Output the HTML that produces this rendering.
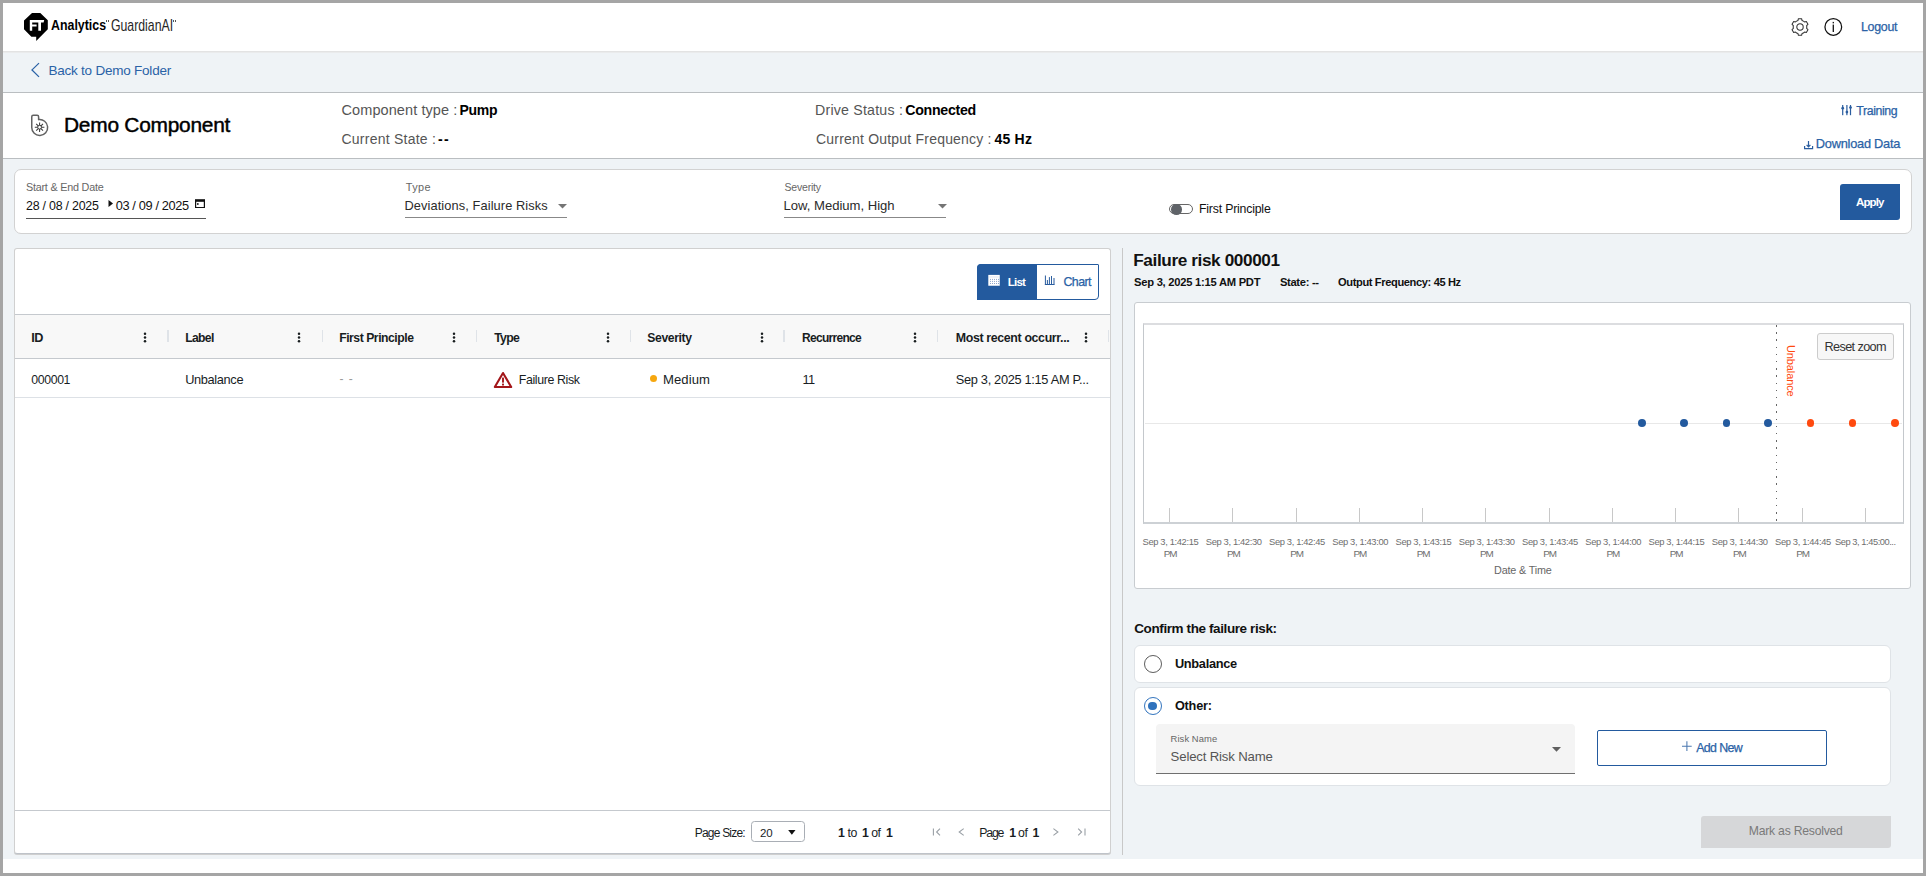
<!DOCTYPE html>
<html><head><meta charset="utf-8">
<style>
*{box-sizing:border-box;margin:0;padding:0}
html,body{width:1926px;height:876px;overflow:hidden}
body{position:relative;background:#a5a5a5;font-family:"Liberation Sans",sans-serif;color:#000}
.a{position:absolute}
.t{position:absolute;white-space:nowrap;line-height:1}
.card{position:absolute;background:#fff;border:1px solid #d3d7db}
</style></head>
<body>
<div class="a" style="left:3px;top:3px;width:1920px;height:870px;background:#fff"></div>
<div class="a" style="left:3px;top:51px;width:1920px;height:808px;background:#eff3f6"></div>
<div class="a" style="left:3px;top:51px;width:1920px;height:1px;background:#e3e3e3"></div>
<div class="a" style="left:3px;top:52px;width:1920px;height:1px;background:#eaebec"></div>

<!-- logo -->
<svg class="a" style="left:23px;top:12px" width="26" height="30" viewBox="0 0 26 30">
  <path d="M9 1H17.3L24.8 8.3V17.3L13.2 29V24.7H8.4L1 17.2V8.5Z" fill="#000"/>
  <path d="M6.8 8H21.2L20.6 10.5H18V18.8H15.3V10.5H9.2V12.4H13.6V14.5H9.2V18.8H6.8Z" fill="#fff"/>
</svg>
<div class="a" style="left:106px;top:20px;width:1.2px;height:2px;background:#555"></div>
<div class="a" style="left:107.6px;top:20px;width:1.2px;height:2px;background:#555"></div>
<div class="a" style="left:173px;top:20px;width:1.2px;height:2px;background:#555"></div>
<div class="a" style="left:174.6px;top:20px;width:1.2px;height:2px;background:#555"></div>

<!-- header right icons -->
<svg class="a" style="left:1790px;top:17px" width="20" height="20" viewBox="0 0 20 20">
  <path fill="none" stroke="#333" stroke-width="1.05" stroke-linejoin="round" d="M7.90 3.53L8.40 1.75L11.60 1.75L12.10 3.53A6.8 6.8 0 0 1 14.55 4.95L16.34 4.49L17.94 7.27L16.65 8.59A6.8 6.8 0 0 1 16.65 11.41L17.94 12.73L16.34 15.51L14.55 15.05A6.8 6.8 0 0 1 12.10 16.47L11.60 18.25L8.40 18.25L7.90 16.47A6.8 6.8 0 0 1 5.45 15.05L3.66 15.51L2.06 12.73L3.35 11.41A6.8 6.8 0 0 1 3.35 8.59L2.06 7.27L3.66 4.49L5.45 4.95A6.8 6.8 0 0 1 7.90 3.53Z"/>
  <circle cx="10" cy="10" r="3.2" fill="none" stroke="#333" stroke-width="1.05"/>
</svg>
<svg class="a" style="left:1823px;top:17px" width="20" height="20" viewBox="0 0 20 20">
  <circle cx="10.3" cy="9.9" r="8.35" fill="none" stroke="#111" stroke-width="1.25"/>
  <rect x="9.65" y="4.9" width="1.3" height="1.45" fill="#111"/>
  <rect x="9.65" y="7.6" width="1.3" height="7.4" fill="#111"/>
</svg>

<!-- breadcrumb -->
<svg class="a" style="left:29px;top:61px" width="12" height="18" viewBox="0 0 12 18">
  <path d="M10 2.1L3 8.9L10 15.9" fill="none" stroke="#2a62a6" stroke-width="1.3"/>
</svg>

<!-- component header -->
<div class="a" style="left:3px;top:92px;width:1920px;height:67px;background:#fff;border-top:1px solid #babec1;border-bottom:1px solid #babec1"></div>
<svg class="a" style="left:29px;top:112px" width="22" height="27" viewBox="0 0 22 27">
  <path d="M2.75 15.5V4.65Q2.75 3.15 4.25 3.15H8.1Q9.6 3.15 9.6 4.65V7.63A7.95 7.95 0 1 1 2.75 15.5Z" fill="none" stroke="#626262" stroke-width="1.5" stroke-linejoin="round"/>
  <g stroke="#3a3a3a" stroke-width="1.05"><path d="M10.6 10.4V20M5.8 15.2H15.4M7.2 11.8L14 18.6M14 11.8L7.2 18.6"/></g>
  <circle cx="10.6" cy="15.2" r="1.9" fill="#fff" stroke="#3a3a3a" stroke-width="1"/>
</svg>

<!-- training / download icons -->
<svg class="a" style="left:1840px;top:104px" width="13" height="12" viewBox="0 0 13 12">
  <g fill="#2a5d9f">
   <rect x="2.1" y="1" width="1.2" height="10.2"/><rect x="6.3" y="1" width="1.2" height="10.2"/><rect x="9.9" y="1" width="1.2" height="10.2"/>
   <circle cx="2.7" cy="4.2" r="1.35"/><circle cx="6.9" cy="8.1" r="1.35"/><circle cx="10.5" cy="3.6" r="1.35"/>
  </g>
</svg>
<svg class="a" style="left:1803px;top:140px" width="12" height="10" viewBox="0 0 12 10">
  <path d="M5.5 1V6.5M3.6 4.8L5.5 6.8L7.4 4.8M1.6 6V8.7H9.6V6" fill="none" stroke="#2a5d9f" stroke-width="1.2"/>
</svg>

<!-- filter card -->
<div class="card" style="left:14px;top:169px;width:1898px;height:65px;border-radius:7px;border-color:#d2d2d2"></div>
<svg class="a" style="left:107px;top:199px" width="8" height="10" viewBox="0 0 8 10"><path d="M1.5 1L6 4.5L1.5 8Z" fill="#111"/></svg>
<svg class="a" style="left:194px;top:198px" width="12" height="12" viewBox="0 0 12 12"><path d="M1.6 2H10.4V9.5H1.6Z" fill="none" stroke="#111" stroke-width="1.2"/><rect x="1" y="1.4" width="10" height="2.4" fill="#111"/><rect x="3" y="5.2" width="1.6" height="1.6" fill="#111"/></svg>
<div class="a" style="left:26px;top:218px;width:180px;height:1px;background:#555"></div>
<svg class="a" style="left:557px;top:203px" width="11" height="7" viewBox="0 0 11 7"><path d="M1 1H10L5.5 5.4Z" fill="#757575"/></svg>
<div class="a" style="left:405px;top:217px;width:162px;height:1px;background:#888"></div>
<svg class="a" style="left:936.5px;top:203px" width="11" height="7" viewBox="0 0 11 7"><path d="M1 1H10L5.5 5.4Z" fill="#757575"/></svg>
<div class="a" style="left:784px;top:217px;width:162px;height:1px;background:#888"></div>
<div class="a" style="left:1169.3px;top:204.2px;width:23.5px;height:9.6px;border:1.3px solid #666;border-radius:5px"></div>
<div class="a" style="left:1171.2px;top:204.2px;width:10.6px;height:10.6px;border-radius:50%;background:#5f6368"></div>
<div class="a" style="left:1840px;top:184px;width:60px;height:36px;background:#235a9e;border-radius:3px 0 3px 0"></div>

<!-- table card -->
<div class="card" style="left:14px;top:248px;width:1097px;height:606px;border-radius:3px;border-color:#d0d0d0;border-bottom-color:#bfc3c9;box-shadow:0 1px 0 #cfcfcf"></div>
<div class="a" style="left:977px;top:264px;width:122px;height:36px;border:1.4px solid #235a9e;border-radius:4px 1px 4px 0;background:#fff"></div>
<div class="a" style="left:977px;top:264px;width:60px;height:36px;background:#235a9e;border-radius:4px 0 0 0"></div>
<svg class="a" style="left:988px;top:274px" width="12" height="12" viewBox="0 0 12 12">
  <rect x="0.3" y="0.9" width="11.45" height="10.85" fill="#fff"/>
  <rect x="1.3" y="1.9" width="9.45" height="2" fill="#eef1f8"/>
  <g fill="#8ea6cc"><rect x="2.0" y="4.9" width="1" height="1"/><rect x="4.0" y="4.9" width="1" height="1"/><rect x="6.0" y="4.9" width="1" height="1"/><rect x="8.0" y="4.9" width="1" height="1"/><rect x="10.0" y="4.9" width="1" height="1"/><rect x="2.0" y="6.9" width="1" height="1"/><rect x="4.0" y="6.9" width="1" height="1"/><rect x="6.0" y="6.9" width="1" height="1"/><rect x="8.0" y="6.9" width="1" height="1"/><rect x="10.0" y="6.9" width="1" height="1"/><rect x="2.0" y="9.0" width="1" height="1"/><rect x="4.0" y="9.0" width="1" height="1"/><rect x="6.0" y="9.0" width="1" height="1"/><rect x="8.0" y="9.0" width="1" height="1"/><rect x="10.0" y="9.0" width="1" height="1"/></g>
</svg>
<svg class="a" style="left:1044px;top:275px" width="12" height="11" viewBox="0 0 12 11">
  <g fill="#2a5d9f"><rect x="0.9" y="0.5" width="1" height="9.5"/><rect x="0.9" y="9" width="9.6" height="1"/><rect x="2.9" y="5" width="1" height="4.5"/><rect x="4.9" y="2.1" width="1" height="7.4"/><rect x="7" y="1" width="1" height="8.5"/><rect x="9.5" y="3" width="1" height="6.5"/></g>
</svg>

<div class="a" style="left:15px;top:314px;width:1095px;height:45px;background:#f8f8f8;border-top:1px solid #c5c9ce;border-bottom:1px solid #c5c9ce"></div>
<div class="a" style="left:15px;top:397px;width:1095px;height:1px;background:#dde1e6"></div>
<svg class="a" style="left:142.9px;top:331px" width="4" height="12" viewBox="0 0 4 12"><g fill="#181d1f"><circle cx="2" cy="2.7" r="1.25"/><circle cx="2" cy="6.5" r="1.25"/><circle cx="2" cy="10.3" r="1.25"/></g></svg>
<svg class="a" style="left:297.0px;top:331px" width="4" height="12" viewBox="0 0 4 12"><g fill="#181d1f"><circle cx="2" cy="2.7" r="1.25"/><circle cx="2" cy="6.5" r="1.25"/><circle cx="2" cy="10.3" r="1.25"/></g></svg>
<svg class="a" style="left:451.7px;top:331px" width="4" height="12" viewBox="0 0 4 12"><g fill="#181d1f"><circle cx="2" cy="2.7" r="1.25"/><circle cx="2" cy="6.5" r="1.25"/><circle cx="2" cy="10.3" r="1.25"/></g></svg>
<svg class="a" style="left:605.5px;top:331px" width="4" height="12" viewBox="0 0 4 12"><g fill="#181d1f"><circle cx="2" cy="2.7" r="1.25"/><circle cx="2" cy="6.5" r="1.25"/><circle cx="2" cy="10.3" r="1.25"/></g></svg>
<svg class="a" style="left:759.5px;top:331px" width="4" height="12" viewBox="0 0 4 12"><g fill="#181d1f"><circle cx="2" cy="2.7" r="1.25"/><circle cx="2" cy="6.5" r="1.25"/><circle cx="2" cy="10.3" r="1.25"/></g></svg>
<svg class="a" style="left:913.3px;top:331px" width="4" height="12" viewBox="0 0 4 12"><g fill="#181d1f"><circle cx="2" cy="2.7" r="1.25"/><circle cx="2" cy="6.5" r="1.25"/><circle cx="2" cy="10.3" r="1.25"/></g></svg>
<svg class="a" style="left:1084.3px;top:331px" width="4" height="12" viewBox="0 0 4 12"><g fill="#181d1f"><circle cx="2" cy="2.7" r="1.25"/><circle cx="2" cy="6.5" r="1.25"/><circle cx="2" cy="10.3" r="1.25"/></g></svg>
<div class="a" style="left:167.05px;top:330.3px;width:1.5px;height:12.2px;background:#dfe3e8"></div>
<div class="a" style="left:321.55px;top:330.3px;width:1.5px;height:12.2px;background:#dfe3e8"></div>
<div class="a" style="left:475.55px;top:330.3px;width:1.5px;height:12.2px;background:#dfe3e8"></div>
<div class="a" style="left:629.55px;top:330.3px;width:1.5px;height:12.2px;background:#dfe3e8"></div>
<div class="a" style="left:783.05px;top:330.3px;width:1.5px;height:12.2px;background:#dfe3e8"></div>
<div class="a" style="left:936.75px;top:330.3px;width:1.5px;height:12.2px;background:#dfe3e8"></div>
<div class="a" style="left:1107.95px;top:330.3px;width:1.5px;height:12.2px;background:#dfe3e8"></div>

<div class="t" style="left:339.5px;top:373px;font-size:12px;color:#9a9a9a;letter-spacing:1px">- -</div>
<svg class="a" style="left:492px;top:370px" width="22" height="20" viewBox="0 0 22 20">
  <path d="M11 3L19.2 17H2.8Z" fill="none" stroke="#a3161a" stroke-width="2.1" stroke-linejoin="round"/>
  <rect x="10.05" y="7.6" width="1.9" height="5" fill="#a3161a"/><rect x="10.05" y="13.6" width="1.9" height="1.9" fill="#a3161a"/>
</svg>
<div class="a" style="left:650.4px;top:375.1px;width:7px;height:7px;border-radius:50%;background:#f6a70f"></div>

<div class="a" style="left:15px;top:810px;width:1095px;height:1px;background:#c5c9ce"></div>
<div class="a" style="left:751.4px;top:821.4px;width:53.2px;height:21px;border:1px solid #a9aeb5;border-radius:3.5px;background:#fff"></div>
<svg class="a" style="left:786.5px;top:828.5px" width="10" height="7" viewBox="0 0 10 7"><path d="M1.2 1H8.5L4.85 5.7Z" fill="#111"/></svg>

<svg class="a" style="left:930px;top:826px" width="14" height="12" viewBox="0 0 14 12"><path d="M3.4 2.4V9.6M10 2.6L6.6 6L10 9.4" fill="none" stroke="#9aa0a6" stroke-width="1.1"/></svg>
<svg class="a" style="left:955px;top:826px" width="12" height="12" viewBox="0 0 12 12"><path d="M8.7 2.6L4.2 6L8.7 9.4" fill="none" stroke="#9aa0a6" stroke-width="1.1"/></svg>

<svg class="a" style="left:1050px;top:826px" width="12" height="12" viewBox="0 0 12 12"><path d="M3.4 2.6L7.9 6L3.4 9.4" fill="none" stroke="#9aa0a6" stroke-width="1.1"/></svg>
<svg class="a" style="left:1075px;top:826px" width="14" height="12" viewBox="0 0 14 12"><path d="M3.2 2.6L6.6 6L3.2 9.4M10 2.4V9.6" fill="none" stroke="#9aa0a6" stroke-width="1.1"/></svg>

<!-- divider -->
<div class="a" style="left:1122px;top:248px;width:1px;height:607px;background:#c8c8c8"></div>

<!-- chart card -->
<div class="card" style="left:1134px;top:302px;width:777px;height:287px;border-radius:3px;border-color:#c8ccd0"></div>
<div class="a" style="left:1143px;top:323px;width:761px;height:201px;border-style:solid;border-color:#dcdde0 #c4c8cc #cdd1d5 #c4c8cc;border-width:2px 1px 2px 1px"></div>
<div class="a" style="left:1145px;top:423px;width:757px;height:1px;background:#e8e8e8"></div>
<div class="a" style="left:1169.00px;top:508px;width:1px;height:14px;background:#c8c8c8"></div>
<div class="a" style="left:1232.25px;top:508px;width:1px;height:14px;background:#c8c8c8"></div>
<div class="a" style="left:1295.50px;top:508px;width:1px;height:14px;background:#c8c8c8"></div>
<div class="a" style="left:1358.75px;top:508px;width:1px;height:14px;background:#c8c8c8"></div>
<div class="a" style="left:1422.00px;top:508px;width:1px;height:14px;background:#c8c8c8"></div>
<div class="a" style="left:1485.25px;top:508px;width:1px;height:14px;background:#c8c8c8"></div>
<div class="a" style="left:1548.50px;top:508px;width:1px;height:14px;background:#c8c8c8"></div>
<div class="a" style="left:1611.75px;top:508px;width:1px;height:14px;background:#c8c8c8"></div>
<div class="a" style="left:1675.00px;top:508px;width:1px;height:14px;background:#c8c8c8"></div>
<div class="a" style="left:1738.25px;top:508px;width:1px;height:14px;background:#c8c8c8"></div>
<div class="a" style="left:1801.50px;top:508px;width:1px;height:14px;background:#c8c8c8"></div>
<div class="a" style="left:1864.75px;top:508px;width:1px;height:14px;background:#c8c8c8"></div>
<div class="a" style="left:1775.7px;top:325px;width:1.6px;height:197px;background:repeating-linear-gradient(#666 0 1.5px,transparent 1.5px 7.2px)"></div>
<div class="a" style="left:1638.1px;top:419.1px;width:7.8px;height:7.8px;border-radius:50%;background:#235a9e"></div>
<div class="a" style="left:1680.3px;top:419.1px;width:7.8px;height:7.8px;border-radius:50%;background:#235a9e"></div>
<div class="a" style="left:1722.7px;top:419.1px;width:7.8px;height:7.8px;border-radius:50%;background:#235a9e"></div>
<div class="a" style="left:1764.1px;top:419.1px;width:7.8px;height:7.8px;border-radius:50%;background:#235a9e"></div>
<div class="a" style="left:1806.5px;top:419.1px;width:7.8px;height:7.8px;border-radius:50%;background:#ff4a0f"></div>
<div class="a" style="left:1848.7px;top:419.1px;width:7.8px;height:7.8px;border-radius:50%;background:#ff4a0f"></div>
<div class="a" style="left:1890.9px;top:419.1px;width:7.8px;height:7.8px;border-radius:50%;background:#ff4a0f"></div>

<div class="a" style="left:1817px;top:333px;width:77px;height:26.5px;background:#f7f7f7;border:1px solid #cccccc;border-radius:3px"></div>

<!-- confirm -->
<div class="card" style="left:1134px;top:645px;width:757px;height:38px;border-radius:6px;border-color:#dfe3e7"></div>
<div class="a" style="left:1143.9px;top:655px;width:17.9px;height:17.9px;border:1.3px solid #5a5a5a;border-radius:50%;background:#fff"></div>
<div class="card" style="left:1134px;top:687px;width:757px;height:99px;border-radius:6px;border-color:#dfe3e7"></div>
<div class="a" style="left:1143.9px;top:697px;width:17.9px;height:17.9px;border:1.5px solid #2f72bd;border-radius:50%;background:#fff"></div>
<div class="a" style="left:1148.4px;top:701.5px;width:8.9px;height:8.9px;border-radius:50%;background:#2f72bd"></div>
<div class="a" style="left:1156px;top:724px;width:418.7px;height:49.5px;background:#f4f4f4;border-radius:4px 4px 0 0;border-bottom:1px solid #6f6f6f"></div>
<svg class="a" style="left:1550.5px;top:745.5px" width="11" height="7" viewBox="0 0 11 7"><path d="M1 1H10L5.5 5.8Z" fill="#5f5f5f"/></svg>
<div class="a" style="left:1597.2px;top:730.2px;width:229.5px;height:35.6px;border:1.5px solid #235a9e;border-radius:2px"></div>
<svg class="a" style="left:1681px;top:740px" width="12" height="12" viewBox="0 0 12 12"><path d="M5.9 1.3V11M1 6.2H10.7" stroke="#4b78b0" stroke-width="1.05"/></svg>
<div class="a" style="left:1700.9px;top:815.9px;width:190.1px;height:31.8px;background:#d6d7d9;border-radius:3px 0 3px 0"></div>

<div class="t" style="left:1795.6px;top:344.9px;font-size:11px;letter-spacing:-0.12px;color:#ff4a0f;transform:rotate(90deg);transform-origin:0 0">Unbalance</div>
<div class="t" style="left:48.4px;top:64px;font-size:13.5px;letter-spacing:-0.222px;font-weight:400;color:#2a62a6;">Back to Demo Folder</div>
<div class="t" style="left:1861px;top:21px;font-size:12.4px;letter-spacing:-0.271px;font-weight:400;color:#2a62a6;-webkit-text-stroke:0.25px currentColor;">Logout</div>
<div class="t" style="left:64px;top:115px;font-size:20.9px;letter-spacing:-0.241px;font-weight:400;color:#000;-webkit-text-stroke:0.45px #000;">Demo Component</div>
<div class="t" style="left:341.5px;top:103px;font-size:14.5px;letter-spacing:0.091px;font-weight:400;color:#555;">Component type :</div>
<div class="t" style="left:459.4px;top:103px;font-size:14.0px;letter-spacing:-0.279px;font-weight:700;color:#000;">Pump</div>
<div class="t" style="left:341.5px;top:132px;font-size:14px;letter-spacing:0.239px;font-weight:400;color:#555;">Current State :</div>
<div class="t" style="left:438.1px;top:132px;font-size:14px;letter-spacing:1.238px;font-weight:700;color:#000;">--</div>
<div class="t" style="left:815px;top:103px;font-size:14.2px;letter-spacing:0.207px;font-weight:400;color:#555;">Drive Status :</div>
<div class="t" style="left:905.3px;top:103px;font-size:14.2px;letter-spacing:-0.293px;font-weight:700;color:#000;">Connected</div>
<div class="t" style="left:816px;top:132px;font-size:14px;letter-spacing:0.203px;font-weight:400;color:#555;">Current Output Frequency :</div>
<div class="t" style="left:994.4px;top:132px;font-size:14px;letter-spacing:0.232px;font-weight:700;color:#000;">45 Hz</div>
<div class="t" style="left:1856.3px;top:105px;font-size:12.3px;letter-spacing:-0.376px;font-weight:400;color:#2a62a6;-webkit-text-stroke:0.25px currentColor;">Training</div>
<div class="t" style="left:1815.8px;top:138px;font-size:12.8px;letter-spacing:-0.24px;font-weight:400;color:#2a62a6;-webkit-text-stroke:0.25px currentColor;">Download Data</div>
<div class="t" style="left:25.9px;top:182px;font-size:10.8px;letter-spacing:-0.208px;font-weight:400;color:#666;">Start &amp; End Date</div>
<div class="t" style="left:26px;top:200px;font-size:12.4px;letter-spacing:-0.223px;font-weight:400;color:#111;">28 / 08 / 2025</div>
<div class="t" style="left:115.7px;top:200px;font-size:12.8px;letter-spacing:-0.373px;font-weight:400;color:#111;">03 / 09 / 2025</div>
<div class="t" style="left:405.7px;top:182px;font-size:10.9px;letter-spacing:0.416px;font-weight:400;color:#666;">Type</div>
<div class="t" style="left:404.5px;top:200px;font-size:12.8px;letter-spacing:0.1px;font-weight:400;color:#2b2b2b;">Deviations, Failure Risks</div>
<div class="t" style="left:784.5px;top:182px;font-size:10.5px;letter-spacing:-0.197px;font-weight:400;color:#666;">Severity</div>
<div class="t" style="left:783.5px;top:199px;font-size:13.1px;letter-spacing:-0.017px;font-weight:400;color:#2b2b2b;">Low, Medium, High</div>
<div class="t" style="left:1199px;top:203px;font-size:12.3px;letter-spacing:-0.196px;font-weight:400;color:#111;">First Principle</div>
<div class="t" style="left:1856.1px;top:197px;font-size:11.5px;letter-spacing:-0.937px;font-weight:700;color:#fff;">Apply</div>
<div class="t" style="left:1007.8px;top:276px;font-size:11.6px;letter-spacing:-0.85px;font-weight:700;color:#fff;">List</div>
<div class="t" style="left:1063.5px;top:276px;font-size:12.4px;letter-spacing:-0.589px;font-weight:400;color:#2a62a6;-webkit-text-stroke:0.25px currentColor;">Chart</div>
<div class="t" style="left:31.3px;top:332px;font-size:12.7px;letter-spacing:-0.625px;font-weight:700;color:#181d1f;">ID</div>
<div class="t" style="left:185.2px;top:332px;font-size:12.2px;letter-spacing:-0.661px;font-weight:700;color:#181d1f;">Label</div>
<div class="t" style="left:339.2px;top:332px;font-size:12.2px;letter-spacing:-0.464px;font-weight:700;color:#181d1f;">First Principle</div>
<div class="t" style="left:494.2px;top:332px;font-size:12.3px;letter-spacing:-0.716px;font-weight:700;color:#181d1f;">Type</div>
<div class="t" style="left:647.3px;top:332px;font-size:12.2px;letter-spacing:-0.393px;font-weight:700;color:#181d1f;">Severity</div>
<div class="t" style="left:802px;top:332px;font-size:12.0px;letter-spacing:-0.707px;font-weight:700;color:#181d1f;">Recurrence</div>
<div class="t" style="left:955.8px;top:332px;font-size:12.4px;letter-spacing:-0.367px;font-weight:700;color:#181d1f;">Most recent occurr...</div>
<div class="t" style="left:31.3px;top:374px;font-size:12.3px;letter-spacing:-0.379px;font-weight:400;color:#181d1f;">000001</div>
<div class="t" style="left:185.2px;top:374px;font-size:12.8px;letter-spacing:-0.359px;font-weight:400;color:#181d1f;">Unbalance</div>
<div class="t" style="left:518.7px;top:374px;font-size:12.4px;letter-spacing:-0.374px;font-weight:400;color:#181d1f;">Failure Risk</div>
<div class="t" style="left:663px;top:373px;font-size:13.1px;letter-spacing:0.067px;font-weight:400;color:#181d1f;">Medium</div>
<div class="t" style="left:802.5px;top:374px;font-size:12.8px;letter-spacing:-0.6px;font-weight:400;color:#181d1f;">11</div>
<div class="t" style="left:955.8px;top:374px;font-size:12.8px;letter-spacing:-0.321px;font-weight:400;color:#181d1f;">Sep 3, 2025 1:15 AM P...</div>
<div class="t" style="left:694.8px;top:827px;font-size:12px;letter-spacing:-0.8px;font-weight:400;color:#181d1f;">Page Size:</div>
<div class="t" style="left:760px;top:828px;font-size:11.5px;letter-spacing:-0.096px;font-weight:400;color:#181d1f;">20</div>
<div class="t" style="left:1133.25px;top:252px;font-size:17.2px;letter-spacing:-0.391px;font-weight:700;color:#111;">Failure risk 000001</div>
<div class="t" style="left:1134px;top:277px;font-size:11.2px;letter-spacing:-0.25px;font-weight:700;color:#111;">Sep 3, 2025 1:15 AM PDT</div>
<div class="t" style="left:1279.9px;top:277px;font-size:11.2px;letter-spacing:-0.315px;font-weight:700;color:#111;">State: --</div>
<div class="t" style="left:1338px;top:277px;font-size:11.1px;letter-spacing:-0.37px;font-weight:700;color:#111;">Output Frequency: 45 Hz</div>
<div class="t" style="left:1824.5px;top:341px;font-size:12.7px;letter-spacing:-0.625px;font-weight:400;color:#333;">Reset zoom</div>
<div class="t" style="left:1494px;top:565px;font-size:10.8px;letter-spacing:-0.159px;font-weight:400;color:#666;">Date &amp; Time</div>
<div class="t" style="left:1134.25px;top:622px;font-size:13.5px;letter-spacing:-0.397px;font-weight:700;color:#111;">Confirm the failure risk:</div>
<div class="t" style="left:1174.9px;top:658px;font-size:12.8px;letter-spacing:-0.312px;font-weight:700;color:#111;">Unbalance</div>
<div class="t" style="left:1174.9px;top:700px;font-size:12.7px;letter-spacing:-0.197px;font-weight:700;color:#111;">Other:</div>
<div class="t" style="left:1170.6px;top:734px;font-size:9.4px;letter-spacing:0.084px;font-weight:400;color:#666;">Risk Name</div>
<div class="t" style="left:1170.6px;top:750px;font-size:13.2px;letter-spacing:-0.171px;font-weight:400;color:#555;">Select Risk Name</div>
<div class="t" style="left:1696.2px;top:742px;font-size:12.4px;letter-spacing:-0.621px;font-weight:400;color:#2a62a6;-webkit-text-stroke:0.25px currentColor;">Add New</div>
<div class="t" style="left:1748.8px;top:825px;font-size:12.2px;letter-spacing:-0.231px;font-weight:400;color:#7a7a7a;">Mark as Resolved</div>
<div class="t" style="left:50.9px;top:17px;font-size:15.1px;letter-spacing:0px;font-weight:700;color:#000;transform:scaleX(0.8199);transform-origin:0 0;">Analytics</div>
<div class="t" style="left:111.0px;top:18px;font-size:15.7px;letter-spacing:0px;font-weight:400;color:#262626;transform:scaleX(0.7821);transform-origin:0 0;">GuardianAI</div>
<div class="t" style="left:1142.5px;top:537px;font-size:9.4px;letter-spacing:-0.367px;font-weight:400;color:#6e6e6e;">Sep 3, 1:42:15</div>
<div class="t" style="left:1163.7px;top:549px;font-size:9.9px;letter-spacing:-0.987px;font-weight:400;color:#6e6e6e;">PM</div>
<div class="t" style="left:1205.75px;top:537px;font-size:9.4px;letter-spacing:-0.367px;font-weight:400;color:#6e6e6e;">Sep 3, 1:42:30</div>
<div class="t" style="left:1226.95px;top:549px;font-size:9.9px;letter-spacing:-0.987px;font-weight:400;color:#6e6e6e;">PM</div>
<div class="t" style="left:1269.0px;top:537px;font-size:9.4px;letter-spacing:-0.367px;font-weight:400;color:#6e6e6e;">Sep 3, 1:42:45</div>
<div class="t" style="left:1290.2px;top:549px;font-size:9.9px;letter-spacing:-0.987px;font-weight:400;color:#6e6e6e;">PM</div>
<div class="t" style="left:1332.25px;top:537px;font-size:9.4px;letter-spacing:-0.367px;font-weight:400;color:#6e6e6e;">Sep 3, 1:43:00</div>
<div class="t" style="left:1353.45px;top:549px;font-size:9.9px;letter-spacing:-0.987px;font-weight:400;color:#6e6e6e;">PM</div>
<div class="t" style="left:1395.5px;top:537px;font-size:9.4px;letter-spacing:-0.367px;font-weight:400;color:#6e6e6e;">Sep 3, 1:43:15</div>
<div class="t" style="left:1416.7px;top:549px;font-size:9.9px;letter-spacing:-0.987px;font-weight:400;color:#6e6e6e;">PM</div>
<div class="t" style="left:1458.75px;top:537px;font-size:9.4px;letter-spacing:-0.367px;font-weight:400;color:#6e6e6e;">Sep 3, 1:43:30</div>
<div class="t" style="left:1479.95px;top:549px;font-size:9.9px;letter-spacing:-0.987px;font-weight:400;color:#6e6e6e;">PM</div>
<div class="t" style="left:1522.0px;top:537px;font-size:9.4px;letter-spacing:-0.367px;font-weight:400;color:#6e6e6e;">Sep 3, 1:43:45</div>
<div class="t" style="left:1543.2px;top:549px;font-size:9.9px;letter-spacing:-0.987px;font-weight:400;color:#6e6e6e;">PM</div>
<div class="t" style="left:1585.25px;top:537px;font-size:9.4px;letter-spacing:-0.367px;font-weight:400;color:#6e6e6e;">Sep 3, 1:44:00</div>
<div class="t" style="left:1606.45px;top:549px;font-size:9.9px;letter-spacing:-0.987px;font-weight:400;color:#6e6e6e;">PM</div>
<div class="t" style="left:1648.5px;top:537px;font-size:9.4px;letter-spacing:-0.367px;font-weight:400;color:#6e6e6e;">Sep 3, 1:44:15</div>
<div class="t" style="left:1669.7px;top:549px;font-size:9.9px;letter-spacing:-0.987px;font-weight:400;color:#6e6e6e;">PM</div>
<div class="t" style="left:1711.75px;top:537px;font-size:9.4px;letter-spacing:-0.367px;font-weight:400;color:#6e6e6e;">Sep 3, 1:44:30</div>
<div class="t" style="left:1732.95px;top:549px;font-size:9.9px;letter-spacing:-0.987px;font-weight:400;color:#6e6e6e;">PM</div>
<div class="t" style="left:1775.0px;top:537px;font-size:9.4px;letter-spacing:-0.367px;font-weight:400;color:#6e6e6e;">Sep 3, 1:44:45</div>
<div class="t" style="left:1796.2px;top:549px;font-size:9.9px;letter-spacing:-0.987px;font-weight:400;color:#6e6e6e;">PM</div>
<div class="t" style="left:1835px;top:538px;font-size:9.3px;letter-spacing:-0.447px;font-weight:400;color:#6e6e6e;">Sep 3, 1:45:00...</div>
<div class="t" style="left:838.1px;top:827px;font-size:12.3px;letter-spacing:0px;font-weight:700;color:#181d1f;">1</div>
<div class="t" style="left:847.4px;top:827px;font-size:12.3px;letter-spacing:-0.416px;font-weight:400;color:#181d1f;">to</div>
<div class="t" style="left:861.9px;top:827px;font-size:12.3px;letter-spacing:0px;font-weight:700;color:#181d1f;">1</div>
<div class="t" style="left:871.2px;top:827px;font-size:12.3px;letter-spacing:-0.639px;font-weight:400;color:#181d1f;">of</div>
<div class="t" style="left:885.9px;top:827px;font-size:12.3px;letter-spacing:0px;font-weight:700;color:#181d1f;">1</div>
<div class="t" style="left:979.3px;top:827px;font-size:12.3px;letter-spacing:-1.193px;font-weight:400;color:#181d1f;">Page</div>
<div class="t" style="left:1009.3px;top:827px;font-size:12.3px;letter-spacing:0px;font-weight:700;color:#181d1f;">1</div>
<div class="t" style="left:1018px;top:827px;font-size:12.3px;letter-spacing:-0.439px;font-weight:400;color:#181d1f;">of</div>
<div class="t" style="left:1032.6px;top:827px;font-size:12.3px;letter-spacing:0px;font-weight:700;color:#181d1f;">1</div>
</body></html>
